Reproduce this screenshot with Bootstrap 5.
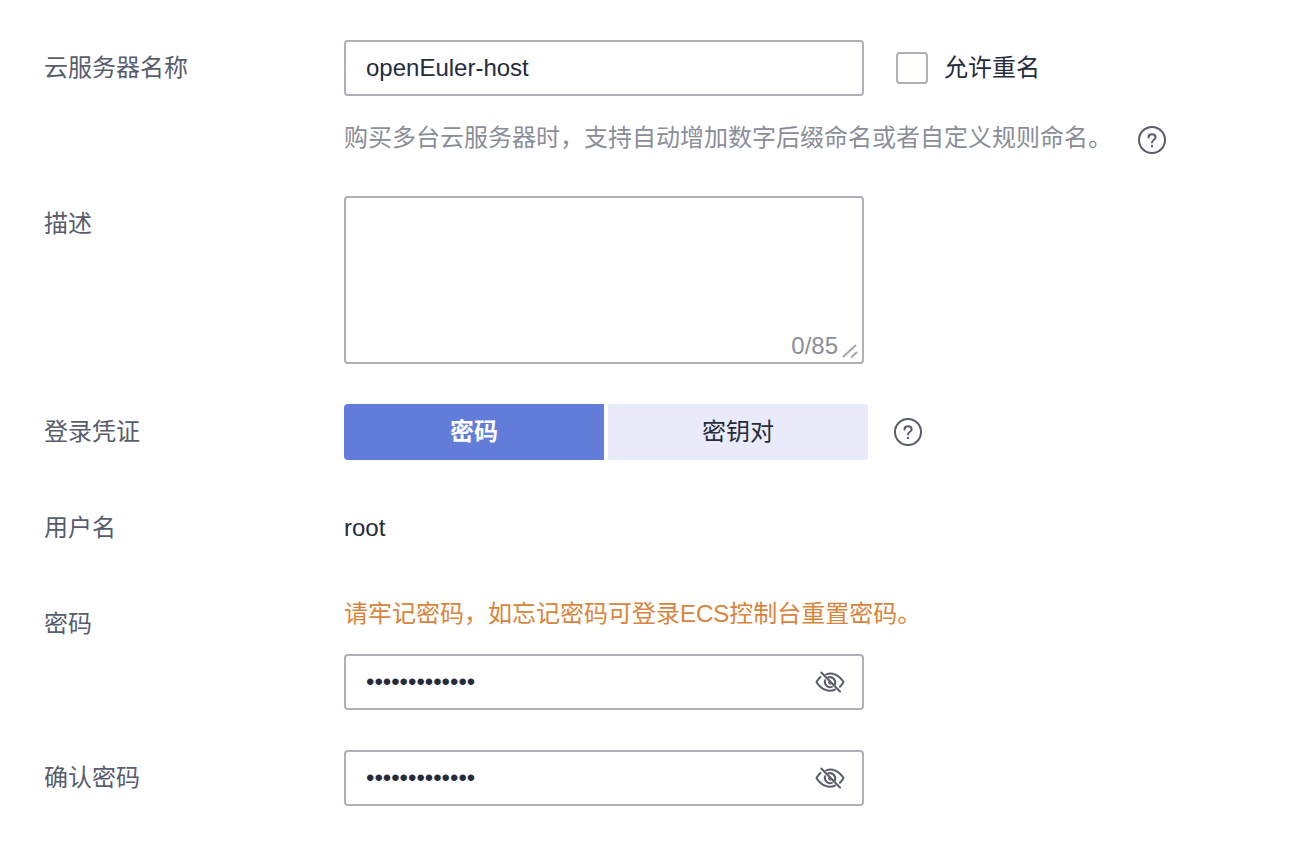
<!DOCTYPE html>
<html lang="zh-CN">
<head>
<meta charset="utf-8">
<meta name="viewport" content="width=device-width, initial-scale=1">
<title>云服务器配置</title>
<link href="https://cdn.jsdelivr.net/npm/bootstrap@5.3.0/dist/css/bootstrap.min.css" rel="stylesheet">
<style>
  body { font-family: "Liberation Sans", "Noto Sans CJK SC", sans-serif; font-size: 24px; line-height: 36px; color: #252b3a; background: #fff; }
  .ecs-form { display: grid; gap: 40px; padding: 40px 44px 36px; }
  .field-title { flex: 0 0 300px; line-height: 56px; color: #575d6c; }
  .field-box { width: 520px; max-width: 100%; }
  .form-control, .form-control:focus { font-size: 24px; line-height: 36px; color: #252b3a; border: 2px solid #adb0b8; border-radius: 4px; padding: 8px 20px; box-shadow: none; }
  .form-control.secret { padding-right: 60px; }
  textarea.form-control { display: block; height: 168px; resize: none; }
  .counter { right: 6px; bottom: 0; gap: 4px; color: #8a8e99; pointer-events: none; }
  .form-check-input { width: 32px; height: 32px; border: 2px solid #adb0b8; }
  .form-check-input[type=checkbox] { border-radius: 4px; }
  .check-line { gap: 32px; }
  .hint { color: #8a8e99; gap: 24px; }
  .warn { color: #d9843c; margin-bottom: 22px; }
  .segments { gap: 4px; }
  .segments .btn { width: 260px; height: 56px; font-size: 24px; line-height: 36px; border: 0; padding: 10px; border-radius: 0; color: #252b3a; background: #e9ebfa; }
  .segments .btn:first-child { border-radius: 4px 0 0 4px; }
  .segments .btn:last-child { border-radius: 0 4px 4px 0; }
  .segments .btn.active { color: #fff; background: #617dd9; font-weight: 700; }
  .icon-btn { border: 0; padding: 0; background: none; color: #575d6c; line-height: 0; }
  .eye { right: 18px; top: 12px; }
</style>
</head>
<body>
<svg class="d-none" xmlns="http://www.w3.org/2000/svg">
  <symbol id="help" viewBox="0 0 32 32">
    <g fill="none" stroke="currentColor" stroke-width="2" stroke-linecap="round" stroke-linejoin="round">
      <circle cx="16" cy="16" r="13"/>
      <path d="M12.500 13.500C12.500 11.400 14 10.300 16 10.300S19.600 11.500 19.600 13.500C19.600 15.800 16 15.800 16 18.600"/>
    </g>
    <circle cx="16" cy="22" r="1.200" fill="currentColor"/>
  </symbol>
  <symbol id="eye-off" viewBox="0 0 32 32">
    <g fill="none" stroke="currentColor" stroke-width="2" stroke-linecap="round" stroke-linejoin="round">
      <path d="M7.300 6.500L26 25.500"/>
      <path d="M12.300 8.400C17.800 6.300 24.800 8.500 29.500 16C28.600 17.800 27.400 19.400 25.900 20.800"/>
      <path d="M6.500 11C4.900 12.400 3.600 14 2.500 16C7.500 24.300 15 26.300 21 23.600"/>
      <path d="M14.400 11.300C19 10.300 22.400 14.400 20.900 18.400"/>
      <path d="M11 14.300C9.900 18.700 13.900 22.300 18 20.900"/>
      <path stroke-width="1.500" d="M14.600 16.200C14.700 17.300 15.400 17.900 16.500 18"/>
    </g>
  </symbol>
</svg>
<form class="ecs-form">
  <div class="d-flex">
    <label class="field-title" for="host">云服务器名称</label>
    <div class="flex-grow-1">
      <div class="check-line d-flex align-items-center">
        <div class="field-box"><input class="form-control" id="host" type="text" value="openEuler-host"></div>
        <div class="d-flex align-items-center gap-3">
          <input class="form-check-input m-0 flex-shrink-0" id="dup" type="checkbox">
          <label for="dup">允许重名</label>
        </div>
      </div>
      <div class="d-flex align-items-end mt-4 hint">
        <span>购买多台云服务器时，支持自动增加数字后缀命名或者自定义规则命名。</span>
        <button class="icon-btn" type="button" aria-label="命名帮助"><svg width="32" height="32"><use href="#help"/></svg></button>
      </div>
    </div>
  </div>
  <div class="d-flex">
    <label class="field-title" for="desc">描述</label>
    <div class="field-box position-relative">
      <textarea class="form-control" id="desc" maxlength="85"></textarea>
      <div class="counter position-absolute d-flex align-items-end">
        <span>0/85</span>
        <svg width="16" height="20" viewBox="0 0 16 20" fill="none" stroke="currentColor" stroke-width="2" stroke-opacity=".8"><path d="M1 13L14 1M9 13.500L15 8"/></svg>
      </div>
    </div>
  </div>
  <div class="d-flex">
    <div class="field-title">登录凭证</div>
    <div class="d-flex align-items-center">
      <div class="segments d-flex" role="group" aria-label="登录凭证">
        <button class="btn active" type="button">密码</button>
        <button class="btn" type="button">密钥对</button>
      </div>
      <button class="icon-btn ms-4" type="button" aria-label="凭证帮助"><svg width="32" height="32"><use href="#help"/></svg></button>
    </div>
  </div>
  <div class="d-flex align-items-center">
    <div class="field-title">用户名</div>
    <div>root</div>
  </div>
  <div class="d-flex">
    <label class="field-title" for="pwd">密码</label>
    <div>
      <div class="warn">请牢记密码，如忘记密码可登录ECS控制台重置密码。</div>
      <div class="field-box position-relative">
        <input class="form-control secret" id="pwd" type="password" value="openEuler@123">
        <button class="icon-btn eye position-absolute" type="button" aria-label="显示密码"><svg width="32" height="32"><use href="#eye-off"/></svg></button>
      </div>
    </div>
  </div>
  <div class="d-flex">
    <label class="field-title" for="pwd2">确认密码</label>
    <div class="field-box position-relative">
      <input class="form-control secret" id="pwd2" type="password" value="openEuler@123">
      <button class="icon-btn eye position-absolute" type="button" aria-label="显示确认密码"><svg width="32" height="32"><use href="#eye-off"/></svg></button>
    </div>
  </div>
</form>
<script src="https://cdn.jsdelivr.net/npm/bootstrap@5.3.0/dist/js/bootstrap.bundle.min.js"></script>
</body>
</html>
